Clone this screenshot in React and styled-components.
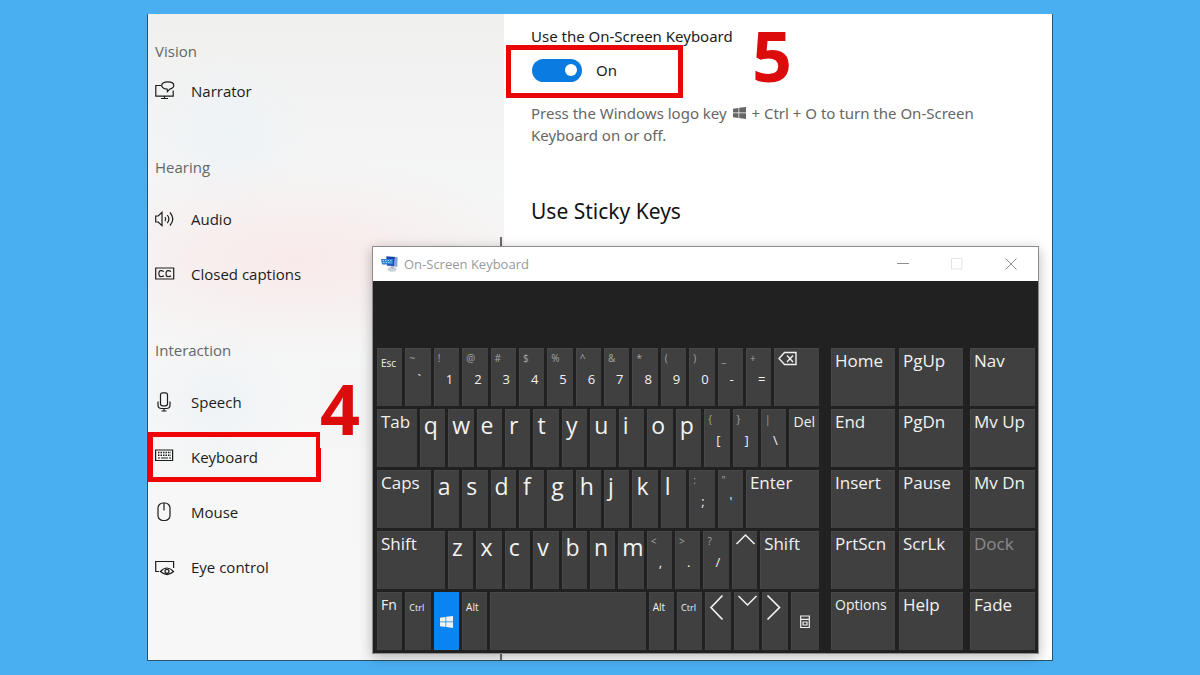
import React, { useState } from "react";
import styled, { createGlobalStyle } from "styled-components";

const GlobalStyle = createGlobalStyle`
  * {
    box-sizing: border-box;
  }
  body {
    margin: 0;
    background: #4aaff1;
    font-family: "Open Sans", "Noto Sans", sans-serif;
  }
  button {
    font-family: inherit;
    border: 0;
    padding: 0;
  }
`;
const Page = styled.div`
  min-height: 100vh;
  display: flex;
  padding: 14px 147px;
`;
const Settings = styled.div`
  flex: 1;
  position: relative;
  display: flex;
  background: white;
  border: 1px solid #2b5268;
  border-top: 0;
`;
const Sidebar = styled.nav`
  position: relative;
  width: 356px;
  flex-shrink: 0;
  display: flex;
  flex-direction: column;
  gap: 40px;
  padding-top: 26px;
  background:
    radial-gradient(ellipse 260px 100px at 150px 245px, #f9eaea, transparent),
    radial-gradient(circle at 80px 120px, #eef3f7, transparent 80px),
    radial-gradient(circle at 70px 390px, #eff3f6, transparent 80px),
    linear-gradient(#f0f0ef, #f5f6f6 30%, #f7f7f7);
`;
const Group = styled.div`
  display: flex;
  flex-direction: column;
  gap: ${(props) => (props.$tight ? "4px" : "16px")};
`;
const GroupTitle = styled.div`
  padding-left: 7px;
  font-size: 15px;
  line-height: 22px;
  color: #666;
`;
const Items = styled.div`
  display: flex;
  flex-direction: column;
  gap: 5px;
`;
const Item = styled.a`
  width: 173px;
  height: 50px;
  display: flex;
  align-items: center;
  gap: 16px;
  padding-left: 2px;
  border: 5px solid ${(props) => (props.$marked ? "#f00505" : "transparent")};
  color: #1c1c1c;
  font-size: 15px;
  text-decoration: none;
  white-space: nowrap;
`;
const Scrollbar = styled.div`
  position: absolute;
  top: 223px;
  bottom: 0;
  right: 2px;
  width: 2px;
  background: #6c6c6c;
`;
const Step = styled.div`
  position: absolute;
  color: #dc0c0c;
  font-size: 70px;
  font-weight: 700;
`;
const StepFour = styled(Step)`
  left: 172px;
  top: 354px;
  width: 52px;
  line-height: 80px;
  background: #f5f5f5;
`;
const StepFive = styled(Step)`
  left: 248px;
  top: 16px;
  line-height: 50px;
`;
const Content = styled.main`
  flex: 1;
  position: relative;
  padding: 13px 60px 0 27px;
  font-family: "Noto Sans", "Open Sans", sans-serif;
`;
const SettingLabel = styled.label`
  display: block;
  font-size: 15px;
  line-height: 18px;
  color: #1c1c1c;
`;
const ToggleBox = styled.div`
  width: 177px;
  height: 53px;
  margin-left: -25px;
  display: flex;
  align-items: center;
  gap: 14px;
  padding: 0 20px 3px 21px;
  border: 5px solid #ea0606;
  font-size: 15px;
  color: #1c1c1c;
`;
const Toggle = styled.input`
  appearance: none;
  width: 50px;
  height: 23px;
  margin: 0;
  padding: 0 5px;
  border-radius: 12px;
  display: flex;
  align-items: center;
  justify-content: ${(props) => (props.checked ? "flex-end" : "flex-start")};
  background: ${(props) => (props.checked ? "#0a7be0" : "#888")};
  &::before {
    content: "";
    width: 12px;
    height: 12px;
    border-radius: 50%;
    background: white;
  }
`;
const Hint = styled.p`
  margin: 4px 0 0;
  font-size: 15px;
  line-height: 22px;
  color: #666;
  svg {
    margin: 0 2px;
  }
`;
const Heading = styled.h2`
  margin: 50px 0 0;
  font-size: 21px;
  font-weight: 400;
  line-height: 30px;
  color: #111;
`;
const Window = styled.section`
  position: absolute;
  top: 232px;
  left: 224px;
  right: 13px;
  border: 1px solid #8d8d8d;
  background: #212121;
  box-shadow: 0 3px 12px rgba(0, 0, 0, 0.28);
`;
const TitleBar = styled.header`
  height: 34px;
  display: flex;
  align-items: center;
  padding-left: 8px;
  background: white;
`;
const Title = styled.div`
  flex: 1;
  padding-left: 5px;
  font-size: 13px;
  color: #999;
`;
const WindowButton = styled.button`
  width: 54px;
  height: 34px;
  display: flex;
  align-items: center;
  justify-content: center;
  background: transparent;
  color: ${(props) => (props.disabled ? "#e3e3e3" : "#8f8f8f")};
`;
const Keys = styled.div`
  display: grid;
  grid-template-columns: 454fr 139fr 65fr;
  padding: 67px 3px 3px 4px;
`;
const MainKeys = styled.div`
  display: grid;
  gap: 3px;
  margin-right: 12px;
`;
const Row = styled.div`
  display: grid;
  grid-template-columns: ${(props) => props.$columns};
  gap: 3px;
`;
const NavKeys = styled.div`
  display: grid;
  grid-template-columns: 1fr 1fr;
  gap: 3px 4px;
  margin-right: 7px;
`;
const SideKeys = styled.div`
  display: grid;
  gap: 3px;
`;
const KeyButton = styled.button`
  min-width: 0;
  height: 58px;
  display: flex;
  flex-direction: column;
  align-items: ${(props) => (props.$center ? "center" : "flex-start")};
  justify-content: ${(props) => (props.$center ? "center" : "flex-start")};
  padding-left: ${(props) => (props.$center ? "0" : "3px")};
  background: ${(props) => (props.$active ? "#0a84f0" : "#404040")};
  border: 1px solid ${(props) => (props.$active ? "#0a84f0" : "#484848")};
  border-width: 1px 0 0 1px;
  color: ${(props) => (props.disabled ? "#8b8b8b" : "#f2f2f2")};
  white-space: nowrap;
`;
const sizes = { tiny: 9, small: 10, medium: 14, word: 17, letter: 23 };
const heights = { tiny: 30, small: 28, medium: 24, word: 24, letter: 30 };
const KeyLabel = styled.span`
  font-size: ${(props) => sizes[props.$size]}px;
  line-height: ${(props) => heights[props.$size]}px;
`;
const ShiftLabel = styled.span`
  height: 18px;
  font-size: 10px;
  line-height: 18px;
  color: #a5a5a5;
`;
const BaseLabel = styled.span`
  padding-left: 8px;
  font-size: 13px;
  line-height: 24px;
`;

const Svg = ({ w = 20, h = 20, stroke = 1.2, children }) => (
  <svg
    width={w}
    height={h}
    viewBox={`0 0 ${w} ${h}`}
    fill="none"
    stroke="currentColor"
    strokeWidth={stroke}
    overflow="visible"
    aria-hidden="true"
  >
    {children}
  </svg>
);
const NarratorIcon = () => (
  <Svg>
    <path d="M6 4.5H.8v10.7h17.4V9.5M9.5 15v2.5M6 17.5h7" />
    <path d="M12.2 8.2C8.500 7.800 6.700 6 6.700 4.300 6.700 2.200 9.300.8 12.800.8s6 1.400 6 3.500c0 2-2 3.400-4 3.800l-2.400 2.500z" />
  </Svg>
);
const AudioIcon = () => (
  <Svg>
    <path d="M.7 7v6h2.500l3.800 3.600V3.400L3.200 7zM10 8q1.500 2 0 4.200M12.300 6q3.200 4 0 8.200M15 3.500q5.600 6.500 0 13" />
  </Svg>
);
const CaptionsIcon = () => (
  <Svg>
    <path d="M.7 4h18v11H.7z" />
    <path d="M8.800 7.500Q5 5.500 4 8.200q-.8 4.800 2.500 4.300 1.300 0 2.300-.8M16 7.500q-3.800-2-4.800.7-.8 4.800 2.500 4.300 1.300 0 2.300-.8" />
  </Svg>
);
const SpeechIcon = () => (
  <Svg>
    <rect x="5.500" y=".8" width="7" height="13" rx="2" />
    <path d="M3 9.500v3.500q0 3.500 3.500 3.500h5q3.500 0 3.500-3.500V9.500M9 16.500v2.500M6.500 19h5" />
  </Svg>
);
const KeyboardIcon = () => (
  <Svg>
    <path d="M.6 3h17v10.500H.6z" />
    <path d="M3 5.500h13M3 8.200h13" strokeWidth="1.500" strokeDasharray="1.500 1" />
    <path d="M3 11h2M6 11h7M14 11h2" />
  </Svg>
);
const MouseIcon = () => (
  <Svg>
    <rect x="3" y="1" width="12" height="17.500" rx="5" />
    <path d="M9 1v7.500" />
  </Svg>
);
const EyeIcon = () => (
  <Svg>
    <path d="M4 14.500H.7V4.500h17.900v6.500" />
    <path d="M5.500 14.500q6.500-7 13 0-6.500 6-13 0z" />
    <circle cx="12" cy="14.300" r="2" />
  </Svg>
);
const WindowsLogo = () => (
  <svg width="13" height="12" viewBox="0 0 13 12" fill="currentColor" aria-hidden="true">
    <path d="M0 1.700 5.500.9v4.700H0zM6.200.8 13 0v5.600H6.200zM0 6.300h5.500V11L0 10.300zM6.200 6.300H13V12l-6.800-.9z" />
  </svg>
);
const AppIcon = () => (
  <svg width="18" height="18" viewBox="0 0 18 18" aria-hidden="true">
    <path d="M5 1 16.500 2v10L6 11z" fill="#b7c8df" />
    <path d="M5.500 1.500 14 2l-1 9-7-.5z" fill="#1e3fae" />
    <path d="M14 2l2.500.5-.5 9-3-.5z" fill="#7fa3dc" />
    <path d="M0 4h12v5.500H1z" fill="#2d7fd6" />
    <path d="M1.500 5.600h9M2 7.600h8.500" stroke="#a8dcff" strokeDasharray="1.500 1" />
    <ellipse cx="11" cy="14.200" rx="4.500" ry="2.500" fill="#cdd3da" />
    <path d="M10 11h3v3h-3z" fill="#b2bccb" />
  </svg>
);
const BackspaceIcon = () => (
  <Svg w={20} h={20} stroke={1.4}>
    <path d="M1 9.500 6.500 3.500H18v12H6.500zM9 6.500l6 6.500M15 6.500l-6 6.500" />
  </Svg>
);
const UpIcon = () => (
  <Svg w={19} h={18} stroke={1.5}>
    <path d="M.5 12 9.500 3l9 9" />
  </Svg>
);
const DownIcon = () => (
  <Svg w={19} h={18} stroke={1.5}>
    <path d="M.5 3 9.500 12l9-9" />
  </Svg>
);
const LeftIcon = () => (
  <Svg w={15} h={30} stroke={1.7}>
    <path d="M13.500 2.500 2 14.500 13.500 26.500" />
  </Svg>
);
const RightIcon = () => (
  <Svg w={15} h={30} stroke={1.7}>
    <path d="M1.500 2.500 13.500 14.500 1.500 26.500" />
  </Svg>
);
const MenuIcon = () => (
  <Svg w={10} h={14} stroke={1.2}>
    <path d="M.7 1h8.600v11.500H.7zM.7 4.300h8.600M3 7h4v3H3z" />
  </Svg>
);

const groups = [
  { title: "Vision", tight: true, items: [["Narrator", NarratorIcon]] },
  {
    title: "Hearing",
    items: [
      ["Audio", AudioIcon],
      ["Closed captions", CaptionsIcon],
    ],
  },
  {
    title: "Interaction",
    items: [
      ["Speech", SpeechIcon],
      ["Keyboard", KeyboardIcon],
      ["Mouse", MouseIcon],
      ["Eye control", EyeIcon],
    ],
  },
];

const letters = (text) => text.split("").map((label) => ({ label, size: "letter" }));
const pairs = (text) => text.split(" ").map((p) => ({ shift: p[0], label: p[1] }));

const rows = [
  [
    { label: "Esc", size: "small" },
    ...pairs("~` !1 @2 #3 $4 %5 ^6 &7 *8 (9 )0 _- +="),
    { name: "Backspace", icon: BackspaceIcon, w: 44 },
  ],
  [
    { label: "Tab", w: 39 },
    ...letters("qwertyuiop"),
    ...pairs("{[ }] |\\"),
    { label: "Del", size: "medium", w: 29 },
  ],
  [{ label: "Caps", w: 53 }, ...letters("asdfghjkl"), ...pairs(":; \"'"), { label: "Enter", w: 72 }],
  [
    { label: "Shift", w: 67 },
    ...letters("zxcvbnm"),
    ...pairs("<, >. ?/"),
    { name: "Up", icon: UpIcon },
    { label: "Shift", w: 58 },
  ],
  [
    { label: "Fn", size: "medium" },
    { label: "Ctrl", size: "tiny" },
    { name: "Windows", icon: WindowsLogo, active: true, center: true },
    { label: "Alt", size: "small" },
    { name: "Space", w: 153 },
    { label: "Alt", size: "small" },
    { label: "Ctrl", size: "tiny" },
    { name: "Left", icon: LeftIcon },
    { name: "Down", icon: DownIcon },
    { name: "Right", icon: RightIcon },
    { name: "Menu", icon: MenuIcon, w: 28, center: true },
  ],
];
const navKeys = ["Home", "PgUp", "End", "PgDn", "Insert", "Pause", "PrtScn", "ScrLk", "Options", "Help"];
const sideKeys = ["Nav", "Mv Up", "Mv Dn", "Dock", "Fade"];

const columns = (row) => row.map(({ w = 25 }) => `minmax(0, ${w}fr)`).join(" ");

const Key = ({ label, shift, size = "word", icon: Icon, name, active, center, disabled }) => (
  <KeyButton type="button" aria-label={name} $active={active} $center={center} disabled={disabled}>
    {Icon && <Icon />}
    {shift && <ShiftLabel>{shift}</ShiftLabel>}
    {shift && <BaseLabel>{label}</BaseLabel>}
    {label && !shift && <KeyLabel $size={size}>{label}</KeyLabel>}
  </KeyButton>
);

const OnScreenKeyboard = () => (
  <Window>
    <TitleBar>
      <AppIcon />
      <Title>On-Screen Keyboard</Title>
      <WindowButton type="button" aria-label="Minimize">
        <Svg w={12} h={12} stroke={1}>
          <path d="M0 5.500h12" />
        </Svg>
      </WindowButton>
      <WindowButton type="button" aria-label="Maximize" disabled>
        <Svg w={12} h={12} stroke={1}>
          <path d="M.5.5h10.500v10.500H.5z" />
        </Svg>
      </WindowButton>
      <WindowButton type="button" aria-label="Close">
        <Svg w={12} h={12} stroke={1}>
          <path d="M.5.5l11 11M11.500.5l-11 11" />
        </Svg>
      </WindowButton>
    </TitleBar>
    <Keys>
      <MainKeys>
        {rows.map((row, i) => (
          <Row key={i} $columns={columns(row)}>
            {row.map((item, j) => (
              <Key key={j} {...item} />
            ))}
          </Row>
        ))}
      </MainKeys>
      <NavKeys>
        {navKeys.map((label) => (
          <Key key={label} label={label} size={label === "Options" ? "medium" : "word"} />
        ))}
      </NavKeys>
      <SideKeys>
        {sideKeys.map((label) => (
          <Key key={label} label={label} disabled={label === "Dock"} />
        ))}
      </SideKeys>
    </Keys>
  </Window>
);

export default function App() {
  const [on, setOn] = useState(true);
  return (
    <Page>
      <GlobalStyle />
      <Settings>
        <Sidebar>
          {groups.map((group) => (
            <Group key={group.title} $tight={group.tight}>
              <GroupTitle>{group.title}</GroupTitle>
              <Items>
                {group.items.map(([name, Icon]) => (
                  <Item href="#" key={name} $marked={name === "Keyboard"}>
                    <Icon />
                    {name}
                  </Item>
                ))}
              </Items>
            </Group>
          ))}
          <Scrollbar />
          <StepFour>4</StepFour>
        </Sidebar>
        <Content>
          <SettingLabel htmlFor="osk">Use the On-Screen Keyboard</SettingLabel>
          <ToggleBox>
            <Toggle id="osk" type="checkbox" checked={on} onChange={() => setOn(!on)} />
            {on ? "On" : "Off"}
          </ToggleBox>
          <Hint>
            Press the Windows logo key <WindowsLogo /> + Ctrl + O to turn the On-Screen Keyboard on or off.
          </Hint>
          <Heading>Use Sticky Keys</Heading>
          <StepFive>5</StepFive>
        </Content>
        <OnScreenKeyboard />
      </Settings>
    </Page>
  );
}
